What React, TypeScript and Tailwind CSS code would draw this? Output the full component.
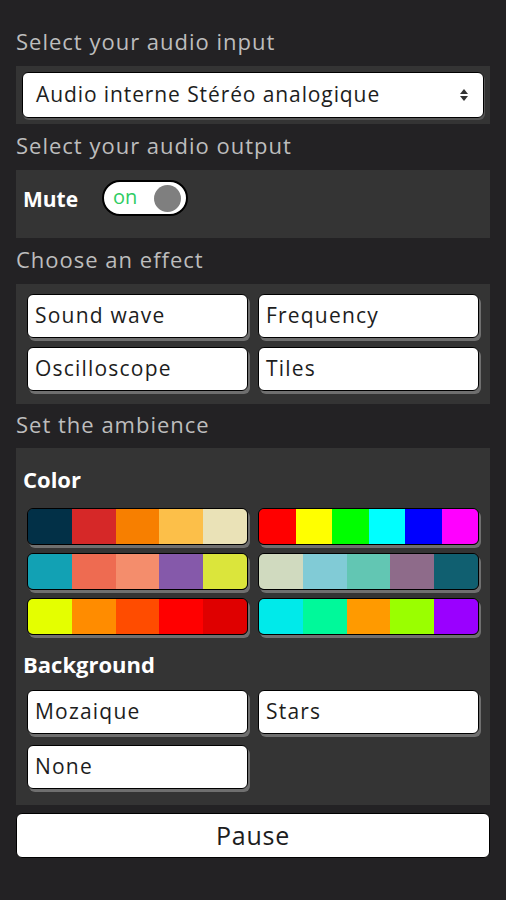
import React from "react";

const palettes: string[][] = [
  ["#023047", "#d62828", "#f77f00", "#fcbf49", "#eae2b7"],
  ["#ff0000", "#ffff00", "#00ff00", "#00ffff", "#0000ff", "#ff00ff"],
  ["#12a1b4", "#ee6b51", "#f48d6c", "#8559aa", "#dbe53b"],
  ["#d0dabf", "#81cbd6", "#62c6b3", "#8e6b8a", "#105f70"],
  ["#e4ff00", "#ff8c00", "#ff4c00", "#ff0000", "#df0000"],
  ["#00eaea", "#00f99a", "#ff9a00", "#9aff00", "#9a00ff"],
];

function Label({ text, h = "h-[46px]" }: { text: string; h?: string }) {
  return (
    <div className={`${h} flex items-center text-[22px] tracking-[1px] text-[#bdbdbd] pb-[3px]`}>{text}</div>
  );
}

function Btn({ text }: { text: string }) {
  return (
    <button className="h-[44px] bg-white rounded-[6px] border border-black shadow-[2px_3px_0_#6f6f6f] text-left pl-[7px] text-[21px] tracking-[1.2px] text-[#1d1d1d]">
      {text}
    </button>
  );
}

export default function App() {
  return (
    <div
      className="w-[506px] h-[900px] bg-[#232224] px-[16px] pt-[20px]"
      style={{ fontFamily: "'Open Sans', sans-serif" }}
    >
      <Label text="Select your audio input" />
      <div className="bg-[#343434] p-[6px]">
        <div className="h-[46px] bg-white rounded-[6px] border border-black shadow-[1px_2px_0_#555] flex items-center justify-between pl-[13px] pr-[14px]">
          <span className="text-[21px] tracking-[0.9px] text-[#1d1d1d]">Audio interne Stéréo analogique</span>
          <svg width="10" height="16" viewBox="0 0 10 16">
            <path d="M5 2 L9 7 H1 Z" fill="#333" />
            <path d="M5 14 L9 9 H1 Z" fill="#333" />
          </svg>
        </div>
      </div>
      <Label text="Select your audio output" />
      <div className="bg-[#343434] h-[68px] pl-[7px] pt-[10px]">
        <div className="flex items-center h-[36px]">
          <span className="text-[21px] font-bold text-white w-[79px] mt-[4px]">Mute</span>
          <div className="w-[86px] h-[36px] bg-white rounded-full border-2 border-black flex items-center justify-between pl-[9px] pr-[5px]">
            <span className="text-[20px] text-[#2fcc63] leading-none -mt-[3px]">on</span>
            <span className="w-[27px] h-[27px] rounded-full bg-[#7f7f7f]" />
          </div>
        </div>
      </div>
      <Label text="Choose an effect" />
      <div className="bg-[#343434] px-[11px] pt-[10px] pb-[13px] grid grid-cols-2 gap-x-[10px] gap-y-[9px]">
        <Btn text="Sound wave" />
        <Btn text="Frequency" />
        <Btn text="Oscilloscope" />
        <Btn text="Tiles" />
      </div>
      <Label text="Set the ambience" h="h-[44px]" />
      <div className="bg-[#343434] px-[7px] pt-[12px] pb-[16px]">
        <div className="h-[40px] flex items-center text-[22px] font-bold text-white pb-[2px]">Color</div>
        <div className="mt-[8px] px-[4px] grid grid-cols-2 gap-x-[10px] gap-y-[8px]">
          {palettes.map((p, i) => (
            <div
              key={i}
              className="h-[37px] flex rounded-[6px] overflow-hidden border border-black shadow-[2px_3px_0_#6f6f6f]"
            >
              {p.map((c, j) => (
                <div key={j} className="flex-1" style={{ backgroundColor: c }} />
              ))}
            </div>
          ))}
        </div>
        <div className="mt-[10px] h-[40px] flex items-center text-[22px] font-bold text-white pb-[2px]">Background</div>
        <div className="mt-[5px] px-[4px] grid grid-cols-2 gap-x-[10px] gap-y-[11px]">
          <Btn text="Mozaique" />
          <Btn text="Stars" />
          <Btn text="None" />
        </div>
      </div>
      <button className="mt-[8px] w-full h-[45px] bg-white rounded-[6px] border border-black text-[25px] tracking-[0.8px] text-[#1d1d1d]">
        Pause
      </button>
    </div>
  );
}
